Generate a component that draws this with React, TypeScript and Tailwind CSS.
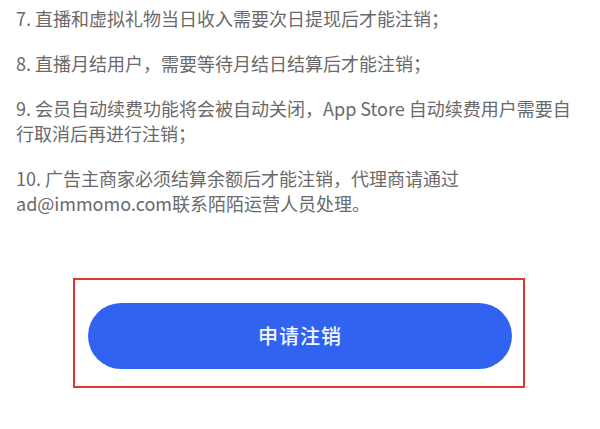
const items: string[] = [
  '7. 直播和虚拟礼物当日收入需要次日提现后才能注销；',
  '8. 直播月结用户，需要等待月结日结算后才能注销；',
  '9. 会员自动续费功能将会被自动关闭，App Store 自动续费用户需要自行取消后再进行注销；',
  '10. 广告主商家必须结算余额后才能注销，代理商请通过ad@immomo.com联系陌陌运营人员处理。',
];

export default function App() {
  return (
    <div
      className="h-[429px] w-[600px] overflow-hidden bg-white"
      style={{ fontFamily: '"Noto Sans CJK SC", "Noto Sans", sans-serif' }}
    >
      <div className="flex flex-col gap-[20px] pl-[16px] pr-[16px] pt-[6px]">
        {items.map((text) => (
          <p key={text} className="text-[18px] leading-[25px] text-[#6a6a6a]">
            {text}
          </p>
        ))}
      </div>

      <div className="mt-[62px] ml-[73px] h-[110px] w-[452px] border-2 border-[#e2362f] pl-[13px] pt-[23px]">
        <button
          type="button"
          className="flex h-[66px] w-[424px] items-center justify-center rounded-full bg-[#3163f1] text-[20px] font-medium tracking-[1px] text-[#f4f6ff]"
        >
          申请注销
        </button>
      </div>
    </div>
  );
}
